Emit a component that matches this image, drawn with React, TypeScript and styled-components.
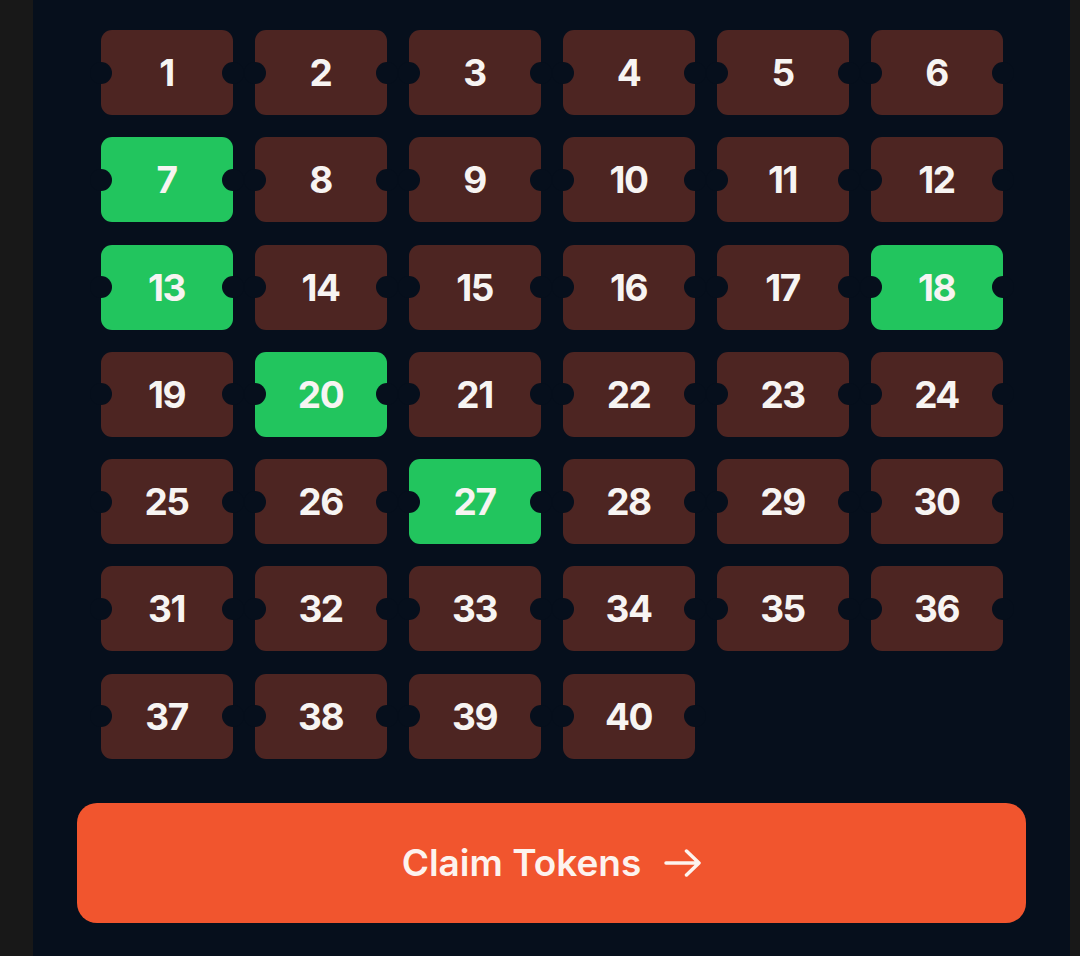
import styled, { createGlobalStyle } from "styled-components";

const GlobalStyle = createGlobalStyle`
  html, body {
    margin: 0;
    padding: 0;
    background: #181818;
    font-family: Inter, "Liberation Sans", sans-serif;
  }
`;

const PAGE_BG = "#060f1c";

const Shell = styled.div`
  display: flex;
  justify-content: flex-start;
  min-height: 956px;
  padding-left: 33px;
  padding-right: 10px;
  background: #181818;
`;

const Panel = styled.main`
  flex: 1;
  background: ${PAGE_BG};
  padding: 30px 44px 33px;
  display: flex;
  flex-direction: column;
  gap: 44px;
`;

const TicketGrid = styled.div`
  display: grid;
  grid-template-columns: repeat(6, 132px);
  column-gap: 22px;
  row-gap: 22.3px;
  justify-content: center;
`;

const Ticket = styled.button<{ $picked: boolean }>`
  position: relative;
  height: 85px;
  border: none;
  border-radius: 11px;
  background: ${({ $picked }) => ($picked ? "#22c55e" : "#4d2522")};
  color: #f7f4f2;
  font-family: Inter, "Liberation Sans", sans-serif;
  font-size: 37px;
  font-weight: 700;
  letter-spacing: -1.5px;
  display: flex;
  align-items: center;
  justify-content: center;
  padding: 0;
  cursor: pointer;

  &::before,
  &::after {
    content: "";
    position: absolute;
    top: 50%;
    width: 22px;
    height: 22px;
    margin-top: -11px;
    border-radius: 50%;
    background: ${PAGE_BG};
  }
  &::before {
    left: -11px;
  }
  &::after {
    right: -11px;
  }
`;

const ClaimButton = styled.button`
  height: 120px;
  border: none;
  border-radius: 20px;
  background: #f1552e;
  color: #fdf3ee;
  font-family: Inter, "Liberation Sans", sans-serif;
  font-size: 37px;
  font-weight: 600;
  display: flex;
  align-items: center;
  justify-content: center;
  gap: 23px;
  cursor: pointer;
`;

const picked = new Set([7, 13, 18, 20, 27]);

function Arrow() {
  return (
    <svg width="37" height="28" viewBox="0 0 37 28" fill="none">
      <path
        d="M2 14h33M22.5 2l12.5 12-12.5 12"
        stroke="#fdf3ee"
        strokeWidth="3.5"
        strokeLinecap="round"
        strokeLinejoin="round"
      />
    </svg>
  );
}

export default function App() {
  const tickets = Array.from({ length: 40 }, (_, i) => i + 1);
  return (
    <>
      <GlobalStyle />
      <Shell>
        <Panel>
          <TicketGrid>
            {tickets.map((n) => (
              <Ticket key={n} $picked={picked.has(n)}>
                {n}
              </Ticket>
            ))}
          </TicketGrid>
          <ClaimButton>
            Claim Tokens
            <Arrow />
          </ClaimButton>
        </Panel>
      </Shell>
    </>
  );
}
